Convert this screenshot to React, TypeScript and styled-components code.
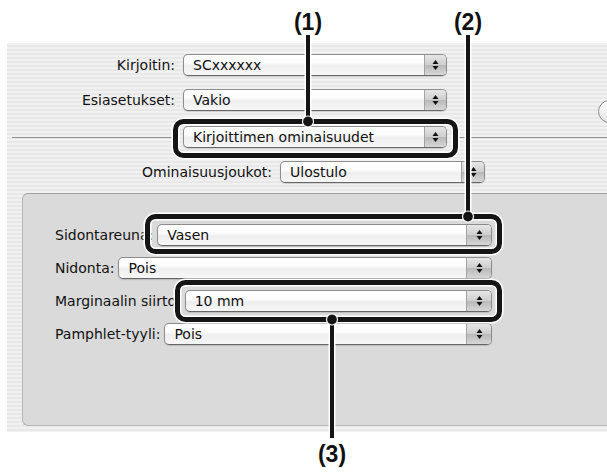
import React from "react";
import styled, { createGlobalStyle } from "styled-components";

const Global = createGlobalStyle`
  html, body { margin: 0; padding: 0; background: #ffffff; overflow: hidden; }
  body { font-family: "DejaVu Sans", "Noto Sans", sans-serif; color: #111; }
`;

const Page = styled.div`
  position: relative;
  width: 607px;
  height: 472px;
  overflow: hidden;
  padding-top: 43px;
  box-sizing: border-box;
`;

const Dialog = styled.div`
  position: relative;
  margin-left: 7px;
  width: 600px;
  height: 389px;
  box-sizing: border-box;
  padding-top: 11px;
  background: repeating-linear-gradient(to bottom, #f1f1f1 0px, #f1f1f1 2px, #e8e8e8 2px, #e8e8e8 4px);
  display: flex;
  flex-direction: column;
  overflow: hidden;
`;

const Row = styled.div<{ $cols: string; $top: number }>`
  display: grid;
  grid-template-columns: ${(p) => p.$cols};
  column-gap: 8px;
  align-items: center;
  height: 22px;
  margin-top: ${(p) => p.$top}px;
`;

const Label = styled.div`
  font-size: 14px;
  line-height: 22px;
  text-align: right;
  white-space: nowrap;
  color: #111;
`;

const Rule = styled.div<{ $inset: number }>`
  height: 1px;
  background: #8f8f8f;
  margin-left: ${(p) => p.$inset}px;
`;

const PopupBox = styled.div<{ $grow?: boolean }>`
  height: 22px;
  box-sizing: border-box;
  border: 1px solid #8c8c8c;
  border-bottom-color: #666666;
  border-radius: 5px;
  background: linear-gradient(to bottom, #ffffff 0%, #fcfcfc 40%, #eeeeee 55%, #f7f7f7 100%);
  box-shadow: 0 1px 1px rgba(0, 0, 0, 0.14);
  display: flex;
  align-items: stretch;
  overflow: hidden;
  flex: ${(p) => (p.$grow ? "1 1 auto" : "none")};
  min-width: 0;
`;

const PopupText = styled.div`
  flex: 1 1 auto;
  padding-left: 9px;
  font-size: 14px;
  line-height: 20px;
  white-space: nowrap;
  overflow: hidden;
  color: #111;
`;

const ArrowPart = styled.div<{ $w: number }>`
  width: ${(p) => p.$w}px;
  flex: none;
  border-left: 1px solid #a4a4a4;
  background: linear-gradient(to bottom, #e6e6e6 0%, #cfcfcf 48%, #b9b9b9 52%, #d7d7d7 100%);
  display: flex;
  align-items: center;
  justify-content: center;
`;

const Panel = styled.div`
  margin-left: 15px;
  margin-top: 10px;
  height: 233px;
  box-sizing: border-box;
  border: 1px solid #b6b6b6;
  border-top-color: #a0a0a0;
  border-right: none;
  border-radius: 6px 0 0 6px;
  background: #dadada;
  padding: 30px 0 0 32px;
  display: flex;
  flex-direction: column;
  gap: 11px;
`;

const PanelRow = styled.div`
  display: flex;
  align-items: center;
  gap: 4px;
  width: 437px;
  height: 22px;
`;

const HelpButton = styled.div`
  position: absolute;
  left: 591px;
  top: 57px;
  width: 23px;
  height: 23px;
  border-radius: 50%;
  border: 1px solid #8a8a8a;
  background: linear-gradient(to bottom, #ffffff, #e4e4e4);
  box-sizing: border-box;
`;

const Overlay = styled.svg`
  position: absolute;
  left: 0;
  top: 0;
  pointer-events: none;
`;

const Callout = styled.div<{ $x: number; $y: number }>`
  position: absolute;
  left: ${(p) => p.$x}px;
  top: ${(p) => p.$y}px;
  transform: translateX(-50%);
  font-family: "Liberation Sans", Arial, sans-serif;
  font-weight: bold;
  font-size: 23px;
  line-height: 23px;
  color: #111;
  white-space: nowrap;
`;

const Arrows = () => (
  <svg width="7" height="12" viewBox="0 0 7 12">
    <polygon points="0.5,5 3.5,1 6.5,5" fill="#111" />
    <polygon points="0.5,7 3.5,11 6.5,7" fill="#111" />
  </svg>
);

const Popup = ({ text, arrow, grow }: { text: string; arrow: number; grow?: boolean }) => (
  <PopupBox $grow={grow}>
    <PopupText>{text}</PopupText>
    <ArrowPart $w={arrow}>
      <Arrows />
    </ArrowPart>
  </PopupBox>
);

const boxes = [
  { x: 175.5, y: 121.5, w: 280, h: 34 },
  { x: 147.5, y: 216.5, w: 352, h: 35 },
  { x: 177.5, y: 282.5, w: 322, h: 37 },
];
const lines = [
  { x: 308, y1: 35, y2: 121.5 },
  { x: 468, y1: 35, y2: 216.5 },
  { x: 332, y1: 319.5, y2: 438 },
];

export default function App() {
  return (
    <Page>
      <Global />
      <Dialog>
        <Row $cols="168px 264px" $top={0}>
          <Label>Kirjoitin:</Label>
          <Popup text="SCxxxxxx" arrow={21} />
        </Row>
        <Row $cols="168px 264px" $top={13}>
          <Label>Esiasetukset:</Label>
          <Popup text="Vakio" arrow={21} />
        </Row>
        <Row $cols="168px 264px 1fr" $top={15}>
          <Rule $inset={5} />
          <Popup text="Kirjoittimen ominaisuudet" arrow={21} />
          <Rule $inset={0} />
        </Row>
        <Row $cols="265px 205px" $top={13}>
          <Label>Ominaisuusjoukot:</Label>
          <Popup text="Ulostulo" arrow={22} />
        </Row>
        <Panel>
          <PanelRow>
            <Label>Sidontareuna:</Label>
            <Popup text="Vasen" arrow={24} grow />
          </PanelRow>
          <PanelRow>
            <Label>Nidonta:</Label>
            <Popup text="Pois" arrow={24} grow />
          </PanelRow>
          <PanelRow>
            <Label>Marginaalin siirto:</Label>
            <Popup text="10 mm" arrow={24} grow />
          </PanelRow>
          <PanelRow>
            <Label>Pamphlet-tyyli:</Label>
            <Popup text="Pois" arrow={24} grow />
          </PanelRow>
        </Panel>
        <HelpButton />
      </Dialog>

      <Overlay width="607" height="472" viewBox="0 0 607 472">
        {boxes.map((b, i) => (
          <rect key={"hw" + i} x={b.x} y={b.y} width={b.w} height={b.h} rx={8} fill="none" stroke="#fff" strokeWidth={8} />
        ))}
        {lines.map((l, i) => (
          <line key={"lw" + i} x1={l.x} y1={l.y1} x2={l.x} y2={l.y2} stroke="#fff" strokeWidth={7} />
        ))}
        {boxes.map((b, i) => (
          <rect key={"b" + i} x={b.x} y={b.y} width={b.w} height={b.h} rx={8} fill="none" stroke="#151515" strokeWidth={5} />
        ))}
        {lines.map((l, i) => (
          <line key={"l" + i} x1={l.x} y1={l.y1} x2={l.x} y2={l.y2} stroke="#151515" strokeWidth={4} />
        ))}
        {[lines[0], lines[1]].map((l, i) => (
          <circle key={"d" + i} cx={l.x} cy={l.y2} r={5.5} fill="#151515" stroke="#fff" strokeWidth={1.2} />
        ))}
        <circle cx={lines[2].x} cy={lines[2].y1} r={5.5} fill="#151515" stroke="#fff" strokeWidth={1.2} />
      </Overlay>
      <Callout $x={308} $y={11}>(1)</Callout>
      <Callout $x={468} $y={11}>(2)</Callout>
      <Callout $x={332} $y={443}>(3)</Callout>
    </Page>
  );
}
